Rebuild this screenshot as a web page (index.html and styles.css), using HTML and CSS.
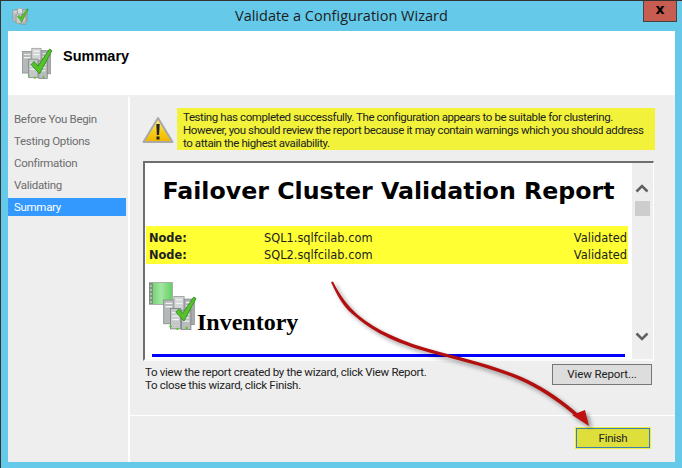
FILE: index.html
```html
<!DOCTYPE html>
<html lang="en">
<head>
<meta charset="utf-8">
<title>Validate a Configuration Wizard</title>
<link rel="stylesheet" href="styles.css">
</head>
<body>
<svg class="defs" width="0" height="0" aria-hidden="true">
  <defs>
    <linearGradient id="warnfill" x1="0" y1="0" x2="0" y2="1">
      <stop offset="0" stop-color="#fdf08a"/><stop offset=".6" stop-color="#f8cb12"/><stop offset="1" stop-color="#f0b400"/>
    </linearGradient>
    <linearGradient id="film" x1="0" y1="0" x2="1" y2="0">
      <stop offset="0" stop-color="#5fcf5f"/><stop offset=".5" stop-color="#a2e6a2"/><stop offset="1" stop-color="#62cf62"/>
    </linearGradient>
    <g id="servers">
      <rect x="2" y="7" width="12" height="28" fill="#b4b8b8" stroke="#8a8e8e"/>
      <rect x="14" y="3" width="12" height="30" fill="#d4d6d6" stroke="#9a9e9e"/>
      <rect x="26" y="6" width="12" height="30" fill="#a9adad" stroke="#8a8e8e"/>
      <rect x="10" y="17" width="12" height="24" fill="#c6c9c9" stroke="#7d8181"/>
      <rect x="23" y="19" width="11" height="23" fill="#b9bcbc" stroke="#7d8181"/>
      <path d="M4 11h8M4 15h8M16 7h8M16 11h8M28 10h8M28 14h8M12 22h8M12 26h8M12 30h8M25 24h7M25 28h7M25 32h7" stroke="#f2f2f2" stroke-width="1.5"/>
      <circle cx="10" cy="38" r="1.4" fill="#5fc32e"/><circle cx="18" cy="41" r="1.4" fill="#5fc32e"/><circle cx="29" cy="40" r="1.4" fill="#5fc32e"/>
    </g>
    <path id="check" d="M13 24l4-4 5 6L37 4l3 2-16 30z" fill="#55c22c" stroke="#2f8f18" stroke-width="1.2" stroke-linejoin="round"/>
  </defs>
</svg>
<div class="window">
  <div class="titlebar">
    <svg class="title-icon" width="18" height="18" viewBox="0 0 44 44"><use href="#servers"/><use href="#check"/></svg>
    <span class="title">Validate a Configuration Wizard</span>
    <button class="close">x</button>
  </div>
  <div class="client">
    <header class="header">
      <svg class="header-icon" width="34" height="34" viewBox="0 0 44 44"><use href="#servers"/><use href="#check"/></svg>
      <h1 class="header-title">Summary</h1>
    </header>
    <div class="body">
      <nav class="steps">
        <div class="step">Before You Begin</div>
        <div class="step">Testing Options</div>
        <div class="step">Confirmation</div>
        <div class="step">Validating</div>
        <div class="step step-active">Summary</div>
      </nav>
      <main class="main">
        <div class="content">
          <div class="notice">
            <svg class="warn" width="32" height="28" viewBox="0 0 32 28">
              <path d="M16 2L30.500 26H1.500z" fill="url(#warnfill)" stroke="#a9a9a9" stroke-width="2" stroke-linejoin="round"/>
              <path d="M14.300 8h3.400l-.6 11h-2.200z" fill="#222"/><rect x="14.500" y="20.500" width="3" height="3" fill="#222"/>
            </svg>
            <p class="notice-text">Testing has completed successfully. The configuration appears to be suitable for clustering.<br>However, you should review the report because it may contain warnings which you should address<br>to attain the highest availability.</p>
          </div>
          <div class="report">
            <div class="report-page">
              <h2 class="report-title">Failover Cluster Validation Report</h2>
              <div class="nodes">
                <div class="node"><b class="node-label">Node:</b><span class="node-name">SQL1.sqlfcilab.com</span><span>Validated</span></div>
                <div class="node"><b class="node-label">Node:</b><span class="node-name">SQL2.sqlfcilab.com</span><span>Validated</span></div>
              </div>
              <div class="inventory">
                <svg width="48" height="48" viewBox="0 0 48 48">
                  <rect x="0.500" y="0.500" width="23" height="22" fill="url(#film)" stroke="#a8b0a8"/>
                  <rect x="0" y="1" width="4" height="21" fill="#7f907f"/>
                  <path d="M1 4h2M1 8h2M1 12h2M1 16h2M1 20h2" stroke="#dfe8df"/>
                  <g transform="translate(13 12) scale(.85)"><use href="#servers"/></g>
                  <g transform="translate(17 12) scale(.75)"><use href="#check"/></g>
                </svg>
                <span class="inventory-title">Inventory</span>
              </div>
              <div class="rule"></div>
            </div>
            <div class="scrollbar">
              <svg width="14" height="10" viewBox="0 0 14 10"><path d="M1.500 8.500L7 3l5.500 5.500" fill="none" stroke="#606060" stroke-width="2.500"/></svg>
              <div class="thumb"></div>
              <svg class="down" width="14" height="10" viewBox="0 0 14 10"><path d="M1.500 1.500L7 7l5.500-5.500" fill="none" stroke="#606060" stroke-width="2.500"/></svg>
            </div>
          </div>
          <div class="actions">
            <p class="hint">To view the report created by the wizard, click View Report.<br>To close this wizard, click Finish.</p>
            <button class="btn">View Report...</button>
          </div>
        </div>
        <footer class="footer"><button class="btn-finish">Finish</button></footer>
      </main>
    </div>
  </div>
</div>
<svg class="arrow" width="682" height="468" viewBox="0 0 682 468">
  <path d="M331 282C338 298 345 309 356 317C374 333 400 345 437 354.500C470 363 503 372 525 382.500C545 392 562 405 578 418L580 415.500C565 402 547 389 527 379.500C505 369 472 360 438 351.500C402 342 376 330 358 315C348 306 340 296 333 281.500z" fill="#b30f0f"/>
  <path d="M589 426L572 415L585 410z" fill="#c00f0f"/>
</svg>
</body>
</html>
```

FILE: styles.css
```css
* { box-sizing: border-box; }
html, body { margin: 0; padding: 0; }
body {
  width: 682px;
  height: 468px;
  overflow: hidden;
  background: #65c9ea;
  font-family: Roboto, "Open Sans", sans-serif;
  position: relative;
}
.defs { position: absolute; }
.window {
  height: 468px;
  border-top: 1px solid #333;
  border-left: 1px solid #333;
  display: flex;
  flex-direction: column;
}
.titlebar {
  height: 30px;
  flex: none;
  display: flex;
  align-items: flex-start;
  position: relative;
}
.title-icon { margin: 6px 0 0 11px; }
.title {
  position: absolute;
  left: 234px;
  top: 6px;
  font: 14.500px/18px "Open Sans", sans-serif;
  color: #1d1d1d;
  white-space: nowrap;
}
.close {
  position: absolute;
  left: 642px;
  top: 0;
  width: 34px;
  height: 21px;
  padding: 0 0 4px;
  background: #c75c50;
  border: 1px solid #444;
  border-top: 0;
  font: bold 14px/16px "DejaVu Sans", sans-serif;
  color: #000;
}
.client {
  margin-left: 7px;
  width: 667px;
  height: 431px;
  background: #fff;
  display: flex;
  flex-direction: column;
}
.header {
  height: 66px;
  flex: none;
  display: flex;
  align-items: flex-start;
  border-bottom: 2px solid #f0f0f0;
}
.header-icon { margin: 15px 0 0 13px; }
.header-title {
  margin: 15px 0 0 8px;
  font: bold 14.500px/20px "Liberation Sans", sans-serif;
  color: #000;
}
.body { flex: 1; display: flex; gap: 2px; min-height: 0; }
.steps {
  width: 120px;
  flex: none;
  background: #eee;
  padding-top: 11px;
}
.step {
  height: 22px;
  padding-left: 6px;
  font-size: 11.500px;
  letter-spacing: -.3px;
  line-height: 22px;
  color: #6d6d6d;
}
.step-active {
  width: 118px;
  height: 18px;
  margin-top: 2px;
  line-height: 18px;
  background: #3399ff;
  color: #fff;
}
.main { flex: 1; display: flex; flex-direction: column; background: #eee; }
.content {
  height: 319px;
  flex: none;
  padding: 11px 0 0 12px;
  border-bottom: 1px solid #fff;
}
.notice { display: flex; height: 42px; }
.warn { margin: 8px 3px 0 0; width: 32px; flex: none; }
.notice-text {
  margin: 0;
  width: 478px;
  height: 42px;
  padding: 3px 0 0 6px;
  background: #f2f23a;
  font-size: 11.500px;
  letter-spacing: -.41px;
  line-height: 13px;
  color: #222;
  white-space: nowrap;
}
.report {
  margin: 11px 0 0 1px;
  width: 511px;
  height: 200px;
  display: flex;
  border-top: 2px solid #6e6e6e;
  border-left: 2px solid #6e6e6e;
  border-right: 1px solid #fff;
  border-bottom: 2px solid #fafafa;
}
.report-page {
  width: 487px;
  flex: none;
  background: #fff;
  height: 196px;
}
.report-title {
  margin: 0;
  padding-top: 12px;
  height: 63px;
  text-align: center;
  font: bold 23.700px/32px "DejaVu Sans", sans-serif;
  color: #000;
  white-space: nowrap;
}
.nodes {
  margin-left: 1px;
  width: 482px;
  height: 38px;
  padding-top: 4px;
  background: #ffff33;
}
.node {
  height: 17px;
  display: flex;
  padding: 0 1px 0 3px;
  font: 11.400px/17px "DejaVu Sans", sans-serif;
  color: #222;
}
.node-label { width: 115px; flex: none; }
.node-name { flex: 1; }
.inventory {
  height: 86px;
  padding: 18px 0 0 4px;
  display: flex;
  align-items: flex-start;
}
.inventory-title {
  margin-top: 26px;
  font: bold 24px/28px "Liberation Serif", serif;
  color: #000;
}
.rule { margin: 4px 0 0 7px; width: 473px; height: 3px; background: #0000ff; }
.scrollbar {
  flex: 1;
  display: flex;
  flex-direction: column;
  align-items: flex-start;
  padding: 20px 0 0 3px;
}
.thumb { width: 15px; height: 15px; margin: 8px 0 0 0; background: #cdcdcd; }
.down { margin-top: 116px; }
.actions { display: flex; justify-content: space-between; padding: 3px 0 0 3px; width: 510px; }
.hint { margin: 0; font-size: 11.500px; letter-spacing: -.3px; line-height: 13px; color: #222; padding-top: 2px; white-space: nowrap; }
.btn {
  width: 100px;
  height: 21px;
  padding: 0;
  background: #ddd;
  border: 1px solid #777;
  font: 11.500px/17px Roboto, sans-serif;
  letter-spacing: -.1px;
  color: #222;
}
.footer {
  flex: 1;
  display: flex;
  justify-content: flex-end;
  padding: 12px 25px 0 0;
}
.btn-finish {
  width: 74px;
  height: 20px;
  padding: 0;
  background: #dfdf3c;
  border: 1px solid #3c7fb0;
  outline: 1px solid #ecec40;
  font: 11.500px/17px Roboto, sans-serif;
  letter-spacing: -.3px;
  color: #222;
}
.arrow {
  position: absolute;
  left: 0;
  top: 0;
  pointer-events: none;
  filter: drop-shadow(3px 3px 2px rgba(0, 0, 0, .4));
}
```
